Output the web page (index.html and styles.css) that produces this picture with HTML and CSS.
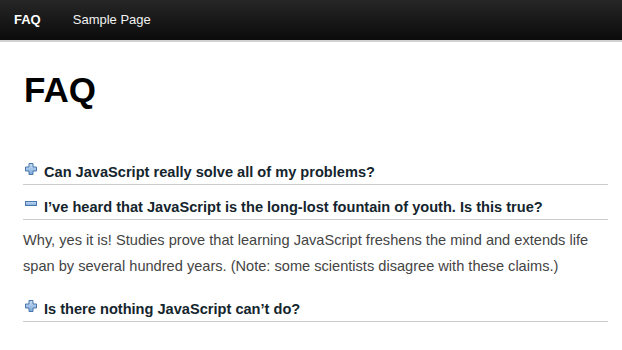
FILE: index.html
```html
<!DOCTYPE html>
<html lang="en">
<head>
<meta charset="utf-8">
<title>FAQ</title>
<link rel="stylesheet" href="styles.css">
</head>
<body>
<nav class="topbar">
  <ul class="menu">
    <li class="menu-item current">FAQ</li>
    <li class="menu-item">Sample Page</li>
  </ul>
</nav>
<main class="content">
  <h1 class="page-title">FAQ</h1>
  <section class="faq">
    <div class="faq-item">
      <h3 class="question">
        <svg class="toggle" viewBox="0 0 12 12" width="12" height="12" aria-hidden="true">
          <defs><linearGradient id="g1" x1="0" y1="0" x2="0" y2="1"><stop offset="0" stop-color="#c9def4"/><stop offset="1" stop-color="#7fa9d9"/></linearGradient></defs>
          <path d="M4 0.5h4v3.5h3.5v4h-3.5v3.5h-4v-3.5h-3.5v-4h3.5z" fill="url(#g1)" stroke="#4976ad" stroke-width="1"/>
        </svg>
        <span>Can JavaScript really solve all of my problems?</span>
      </h3>
    </div>
    <div class="faq-item open">
      <h3 class="question">
        <svg class="toggle" viewBox="0 0 12 12" width="12" height="12" aria-hidden="true">
          <defs><linearGradient id="g2" x1="0" y1="0" x2="0" y2="1"><stop offset="0" stop-color="#c9def4"/><stop offset="1" stop-color="#7fa9d9"/></linearGradient></defs>
          <rect x="0.5" y="3.5" width="11" height="4" fill="url(#g2)" stroke="#4976ad" stroke-width="1"/>
        </svg>
        <span>I’ve heard that JavaScript is the long-lost fountain of youth. Is this true?</span>
      </h3>
      <p class="answer">Why, yes it is! Studies prove that learning JavaScript freshens the mind and extends life span by several hundred years. (Note: some scientists disagree with these claims.)</p>
    </div>
    <div class="faq-item">
      <h3 class="question">
        <svg class="toggle" viewBox="0 0 12 12" width="12" height="12" aria-hidden="true">
          <defs><linearGradient id="g3" x1="0" y1="0" x2="0" y2="1"><stop offset="0" stop-color="#c9def4"/><stop offset="1" stop-color="#7fa9d9"/></linearGradient></defs>
          <path d="M4 0.5h4v3.5h3.5v4h-3.5v3.5h-4v-3.5h-3.5v-4h3.5z" fill="url(#g3)" stroke="#4976ad" stroke-width="1"/>
        </svg>
        <span>Is there nothing JavaScript can’t do?</span>
      </h3>
    </div>
  </section>
</main>
</body>
</html>
```
FILE: styles.css
```css
html, body {
  margin: 0;
  padding: 0;
  background: #fff;
  font-family: "Liberation Sans", Arial, sans-serif;
}

.topbar {
  height: 40px;
  background: linear-gradient(to bottom, #262626, #0b0b0b);
  border-bottom: 2px solid #d2d2d2;
}

.menu {
  list-style: none;
  margin: 0;
  padding: 0 0 0 14px;
  display: flex;
  gap: 32px;
}

.menu-item {
  line-height: 40px;
  font-size: 13px;
  color: #f2f2f2;
}

.menu-item.current {
  font-weight: bold;
  color: #fff;
}

.content {
  padding: 28px 14px 0 23px;
}

.page-title {
  margin: 0 0 0 1px;
  font-size: 35px;
  line-height: 39px;
  font-weight: bold;
  color: #000;
}

.faq {
  margin-top: 41px;
  display: flex;
  flex-direction: column;
}

.faq-item {
  margin-top: 12px;
}

.question {
  margin: 0;
  display: flex;
  align-items: flex-start;
  gap: 7px;
  font-size: 14.6px;
  line-height: 20px;
  font-weight: bold;
  color: #14252d;
  padding-bottom: 2px;
  border-bottom: 1px solid #cccccc;
}

.toggle {
  flex: none;
  margin: 1px 0 0 2px;
}

.answer {
  margin: 8px 0 8px 0;
  font-size: 14.6px;
  line-height: 25.5px;
  color: #444;
}
```
